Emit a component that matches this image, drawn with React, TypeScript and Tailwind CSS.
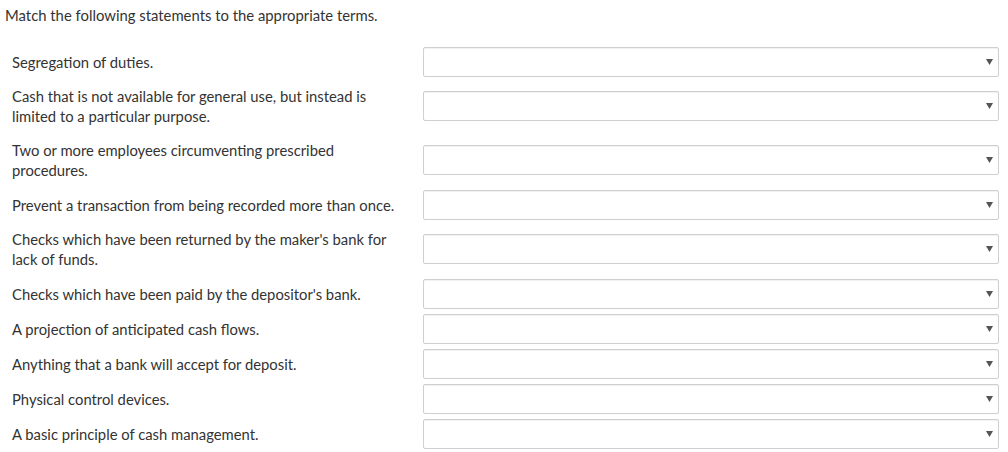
import { useState } from "react";

type Row = { id: number; text: string };

const rows: Row[] = [
  { id: 1, text: "Segregation of duties." },
  { id: 2, text: "Cash that is not available for general use, but instead is limited to a particular purpose." },
  { id: 3, text: "Two or more employees circumventing prescribed procedures." },
  { id: 4, text: "Prevent a transaction from being recorded more than once." },
  { id: 5, text: "Checks which have been returned by the maker's bank for lack of funds." },
  { id: 6, text: "Checks which have been paid by the depositor's bank." },
  { id: 7, text: "A projection of anticipated cash flows." },
  { id: 8, text: "Anything that a bank will accept for deposit." },
  { id: 9, text: "Physical control devices." },
  { id: 10, text: "A basic principle of cash management." },
];

function MatchSelect({ value, onChange }: { value: string; onChange: (v: string) => void }) {
  return (
    <div className="relative h-[30px] w-[576px]">
      <select
        value={value}
        onChange={(e) => onChange(e.target.value)}
        className="h-full w-full appearance-none rounded-[2px] border border-[#cfcfcf] bg-white px-2 text-[14px] text-[#333] shadow-[inset_0_1px_1px_rgba(0,0,0,0.06)] outline-none"
      >
        <option value=""></option>
      </select>
      <svg
        className="pointer-events-none absolute right-[6px] top-[12px]"
        width="7"
        height="6"
        viewBox="0 0 7 6"
      >
        <path d="M0 0 H7 L3.5 6 Z" fill="#555" />
      </svg>
    </div>
  );
}

export default function App() {
  const [answers, setAnswers] = useState<Record<number, string>>({});

  return (
    <div className="min-h-[452px] bg-white px-[5px] pt-[5px] font-['Lato','Open_Sans',sans-serif] text-[#333]">
      <p className="text-[14.85px] leading-5">Match the following statements to the appropriate terms.</p>
      <div className="mt-[19px] flex flex-col">
        {rows.map((row) => (
          <div key={row.id} className="flex items-center">
            <div className="w-[418px] py-[7px] pl-[7px] pr-[18px] text-[14.8px] leading-5">{row.text}</div>
            <div className="py-[2.5px]">
              <MatchSelect
                value={answers[row.id] ?? ""}
                onChange={(v) => setAnswers((a) => ({ ...a, [row.id]: v }))}
              />
            </div>
          </div>
        ))}
      </div>
    </div>
  );
}
